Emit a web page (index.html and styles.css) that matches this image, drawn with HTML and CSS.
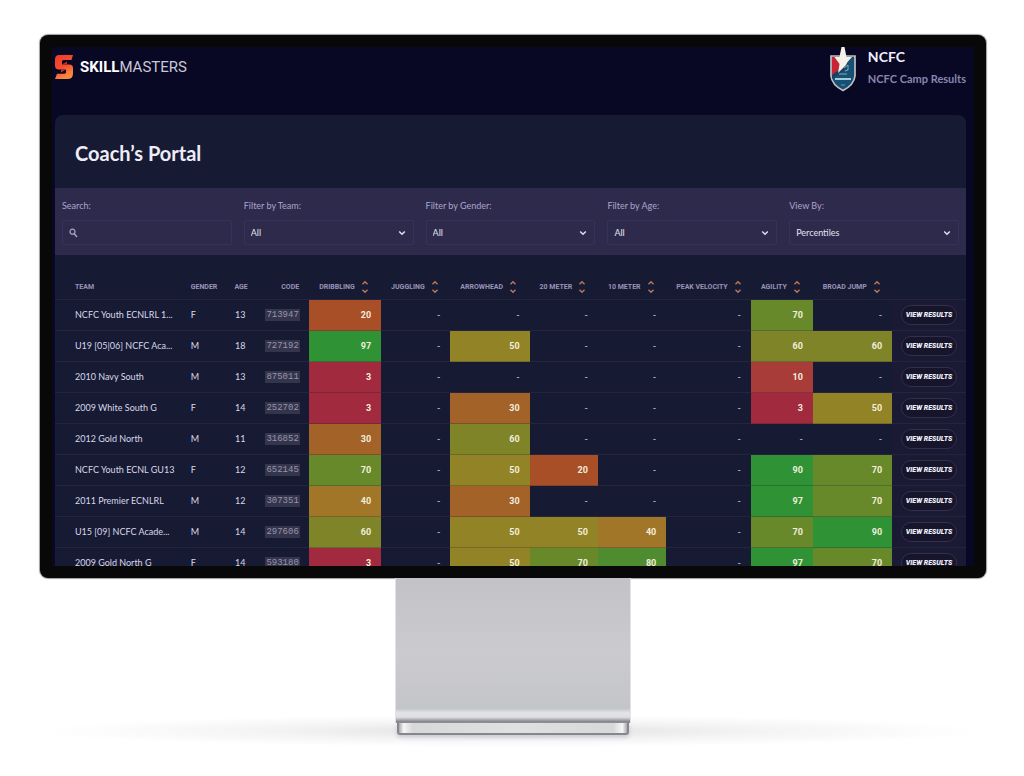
FILE: index.html
```html
<!DOCTYPE html>
<html lang="en">
<head>
<meta charset="utf-8">
<title>Coach’s Portal</title>
<link rel="stylesheet" href="styles.css">
</head>
<body>
<svg class="defs" aria-hidden="true">
  <symbol id="sort" viewBox="0 0 8 14"><path d="M1.5 4.2 4 1.8l2.5 2.4M1.5 9.8 4 12.2l2.500-2.400" fill="none" stroke="currentColor" stroke-width="1.400"/></symbol>
  <symbol id="chevron" viewBox="0 0 8 8"><path d="M1.2 2.5 4 5.3l2.8-2.8" fill="none" stroke="currentColor" stroke-width="1.5"/></symbol>
</svg>
<main class="stage">
  <div class="monitor">
    <div class="screen">
      <header class="topbar">
        <div class="brand">
          <svg class="brand-mark" viewBox="0 0 18 24" aria-hidden="true">
            <defs><linearGradient id="flame" x1="0" y1="0" x2="0.4" y2="1"><stop offset="0" stop-color="#f2382c"/><stop offset="0.6" stop-color="#f4502f"/><stop offset="1" stop-color="#f98a3c"/></linearGradient></defs>
            <path d="M4 0H18L16.500 5H8.500Q7 5 7 6.500V8.500Q7 9.500 8 9.500H14.500Q18 9.500 18 13V18.500Q18 24 12.500 24H0L2 18.700H9.500Q11 18.700 11 17.300V15.500Q11 14.500 10 14.500H4Q0 14.500 0 10.500V4.500Q0 0 4 0Z" fill="url(#flame)"/>
            <path d="M7 9.500 12 6.500V9.500ZM6 14.500H11L6 17.500Z" fill="#c92c26"/>
          </svg>
          <span class="brand-name"><b>SKILL</b>MASTERS</span>
        </div>
        <div class="club">
          <svg class="crest" viewBox="0 0 26 45" aria-hidden="true">
            <path d="M1 9H25V29Q24 38 13 43.500 2 38 1 29Z" fill="#165075" stroke="#c3bfc0" stroke-width="1.700"/>
            <path d="M2 10H12L8 26 2 28Z" fill="#c82436"/>
            <path d="M2 28 18 16V20L2 32Z" fill="#17415f"/>
            <path d="M11.500 0H14.500L16.500 10H22L17.500 15 16 18 8 26 9.500 17 4.500 10H9.500Z" fill="#f6f1e9"/>
            <path d="M14 21 18 18V23L15 24M9 27H17" stroke="#7fabbc" stroke-width="1" fill="none"/>
            <path d="M5 32H21" stroke="#a2cbd9" stroke-width="2"/>
            <path d="M11 38H15" stroke="#5d9bb2"/>
          </svg>
          <div class="club-text"><strong class="club-name">NCFC</strong><span class="club-event">NCFC Camp Results</span></div>
        </div>
      </header>
      <section class="panel">
        <h1 class="title">Coach’s Portal</h1>
        <form class="filters">
          <div class="field"><label for="search">Search:</label>
            <div class="control"><svg class="glass" viewBox="0 0 9 10" aria-hidden="true"><circle cx="3.500" cy="3.700" r="2.500" fill="none" stroke="currentColor" stroke-width="1.200"/><path d="M5.300 5.800 8 9" stroke="currentColor" stroke-width="1.400"/></svg><input id="search" type="text"></div></div>
          <div class="field"><label for="team">Filter by Team:</label>
            <div class="control"><select id="team"><option>All</option></select><svg class="chev"><use href="#chevron"/></svg></div></div>
          <div class="field"><label for="gender">Filter by Gender:</label>
            <div class="control"><select id="gender"><option>All</option></select><svg class="chev"><use href="#chevron"/></svg></div></div>
          <div class="field"><label for="age">Filter by Age:</label>
            <div class="control"><select id="age"><option>All</option></select><svg class="chev"><use href="#chevron"/></svg></div></div>
          <div class="field"><label for="view">View By:</label>
            <div class="control"><select id="view"><option>Percentiles</option></select><svg class="chev"><use href="#chevron"/></svg></div></div>
        </form>
        <table class="results">
          <colgroup><col class="c-team"><col class="c-gender"><col class="c-age"><col class="c-code"><col class="c-drib"><col class="c-jugg"><col class="c-arrow"><col class="c-meter"><col class="c-meter"><col class="c-peak"><col class="c-agil"><col class="c-broad"><col class="c-view"></colgroup>
          <thead><tr><th class="left team">Team</th><th class="left">Gender</th><th>Age</th><th>Code</th>
            <th><button type="button" class="sort">Dribbling<svg><use href="#sort"/></svg></button></th>
            <th><button type="button" class="sort">Juggling<svg><use href="#sort"/></svg></button></th>
            <th><button type="button" class="sort">Arrowhead<svg><use href="#sort"/></svg></button></th>
            <th><button type="button" class="sort">20 Meter<svg><use href="#sort"/></svg></button></th>
            <th><button type="button" class="sort">10 Meter<svg><use href="#sort"/></svg></button></th>
            <th><button type="button" class="sort">Peak Velocity<svg><use href="#sort"/></svg></button></th>
            <th><button type="button" class="sort">Agility<svg><use href="#sort"/></svg></button></th>
            <th><button type="button" class="sort">Broad Jump<svg><use href="#sort"/></svg></button></th>
            <th></th></tr></thead>
          <tbody>
            <tr><td class="left team">NCFC Youth ECNLRL 1...</td><td class="left">F</td><td>13</td><td><code>713947</code></td><td class="s p20">20</td><td class="n">-</td><td class="n">-</td><td class="n">-</td><td class="n">-</td><td class="n">-</td><td class="s p70">70</td><td class="n">-</td><td class="act"><button type="button" class="view">View Results</button></td></tr>
            <tr><td class="left team">U19 [05|06] NCFC Aca...</td><td class="left">M</td><td>18</td><td><code>727192</code></td><td class="s p97">97</td><td class="n">-</td><td class="s p50">50</td><td class="n">-</td><td class="n">-</td><td class="n">-</td><td class="s p60">60</td><td class="s p60">60</td><td class="act"><button type="button" class="view">View Results</button></td></tr>
            <tr><td class="left team">2010 Navy South</td><td class="left">M</td><td>13</td><td><code>875011</code></td><td class="s p3">3</td><td class="n">-</td><td class="n">-</td><td class="n">-</td><td class="n">-</td><td class="n">-</td><td class="s p10">10</td><td class="n">-</td><td class="act"><button type="button" class="view">View Results</button></td></tr>
            <tr><td class="left team">2009 White South G</td><td class="left">F</td><td>14</td><td><code>252702</code></td><td class="s p3">3</td><td class="n">-</td><td class="s p30">30</td><td class="n">-</td><td class="n">-</td><td class="n">-</td><td class="s p3">3</td><td class="s p50">50</td><td class="act"><button type="button" class="view">View Results</button></td></tr>
            <tr><td class="left team">2012 Gold North</td><td class="left">M</td><td>11</td><td><code>316852</code></td><td class="s p30">30</td><td class="n">-</td><td class="s p60">60</td><td class="n">-</td><td class="n">-</td><td class="n">-</td><td class="n">-</td><td class="n">-</td><td class="act"><button type="button" class="view">View Results</button></td></tr>
            <tr><td class="left team">NCFC Youth ECNL GU13</td><td class="left">F</td><td>12</td><td><code>652145</code></td><td class="s p70">70</td><td class="n">-</td><td class="s p50">50</td><td class="s p20">20</td><td class="n">-</td><td class="n">-</td><td class="s p97">90</td><td class="s p70">70</td><td class="act"><button type="button" class="view">View Results</button></td></tr>
            <tr><td class="left team">2011 Premier ECNLRL</td><td class="left">M</td><td>12</td><td><code>307351</code></td><td class="s p40">40</td><td class="n">-</td><td class="s p30">30</td><td class="n">-</td><td class="n">-</td><td class="n">-</td><td class="s p97">97</td><td class="s p70">70</td><td class="act"><button type="button" class="view">View Results</button></td></tr>
            <tr><td class="left team">U15 [09] NCFC Acade...</td><td class="left">M</td><td>14</td><td><code>297606</code></td><td class="s p60">60</td><td class="n">-</td><td class="s p50">50</td><td class="s p50">50</td><td class="s p40">40</td><td class="n">-</td><td class="s p70">70</td><td class="s p97">90</td><td class="act"><button type="button" class="view">View Results</button></td></tr>
            <tr><td class="left team">2009 Gold North G</td><td class="left">F</td><td>14</td><td><code>593180</code></td><td class="s p3">3</td><td class="n">-</td><td class="s p50">50</td><td class="s p70">70</td><td class="s p80">80</td><td class="n">-</td><td class="s p97">97</td><td class="s p70">70</td><td class="act"><button type="button" class="view">View Results</button></td></tr>
          </tbody>
        </table>
      </section>
    </div>
  </div>
  <div class="floor"><div class="stand"><div class="neck"></div><div class="foot"></div></div></div>
</main>
</body>
</html>
```
FILE: styles.css
```css
* { box-sizing: border-box; }
body { margin: 0; background: #fff; font-family: Lato, "Open Sans", sans-serif; color: #d9d8ea; }
button, input, select { font: inherit; color: inherit; }
.defs { display: none; }
.stage { padding: 35px 38px 0 40px; }
.monitor { padding: 12px; background: #080809; border-radius: 8px; box-shadow: 0 0 1px 1px rgba(60, 60, 65, 0.5); }
.screen { aspect-ratio: 922 / 519; overflow: hidden; background: #080724; padding: 0 8px 0 3px; }

.topbar { display: flex; justify-content: space-between; align-items: flex-start; height: 68px; }
.brand { display: flex; align-items: center; gap: 7px; padding-top: 8px; }
.brand-mark { width: 18px; height: 24px; }
.brand-name { font: 400 15px/24px Roboto, sans-serif; color: #c9c8d8; }
.brand-name b { font-weight: 700; color: #fff; }
.club { display: flex; gap: 12px; }
.crest { width: 26px; height: 45px; }
.club-text { display: flex; flex-direction: column; font-family: Lato, sans-serif; }
.club-name { font-size: 14px; line-height: 20px; font-weight: 700; color: #f1f0fa; }
.club-event { font-size: 11px; line-height: 24px; font-weight: 700; color: #8985ae; }

.panel { background: #171a33; border-radius: 8px 8px 0 0; }
.title { margin: 0; padding: 22px 20px 19px; font: 700 20px/32px Lato, sans-serif; color: #eeedf8; }
.filters { display: grid; grid-template-columns: repeat(5, 1fr); gap: 12px; padding: 10px 7px; background: #2e2a4c; }
.field { display: flex; flex-direction: column; gap: 6px; font-size: 9px; color: #aaa6c9; }
.field label { line-height: 16px; }
.control { display: flex; align-items: center; height: 25px; border: 1px solid #37325a; border-radius: 2px; padding: 0 7px 0 6px; }
.control input, .control select { flex: 1; min-width: 0; border: 0; padding: 0; background: none; appearance: none; outline: 0; color: #e5e3f1; }
.control option { background: #2e294c; }
.glass { width: 9px; height: 10px; }
.chev { width: 8px; height: 8px; color: #e0deed; }

.results { width: 100%; table-layout: fixed; border-collapse: separate; border-spacing: 0; font-size: 9px; }
.c-team { width: 13.8%; } .c-gender { width: 4.8%; } .c-age { width: 3.4%; } .c-code { width: 5.9%; }
.c-drib { width: 7.9%; } .c-jugg { width: 7.6%; } .c-arrow { width: 8.7%; } .c-meter { width: 7.5%; }
.c-peak { width: 9.3%; } .c-agil { width: 6.8%; } .c-broad { width: 8.7%; } .c-view { width: 8.1%; }
.results th { height: 45px; padding: 20px 10px 0; border-bottom: 1px solid #25243f; font: 700 7px/14px Roboto, sans-serif; text-transform: uppercase; text-align: right; white-space: nowrap; color: #9894b8; }
.results td { height: 31px; padding: 0 10px 1px; border-bottom: 1px solid #25243f; text-align: right; white-space: nowrap; }
.results .left { text-align: left; }
.results td.team { padding: 0 0 1px 20px; }
.results th.team { padding: 20px 0 0 20px; }
.sort { display: flex; align-items: center; gap: 6px; padding: 0; border: 0; background: none; text-transform: inherit; }
.sort svg { flex: none; width: 8px; height: 14px; color: #b9795f; }
.results code { display: inline-block; padding: 0 1px; background: #34344c; color: #9795ac; font: 9px/12px "Liberation Mono", monospace; }
.results .s { font-family: Roboto, sans-serif; font-weight: 700; color: #f2eedd; border-bottom-color: rgba(23, 26, 51, 0.25); }
.results .n { color: #a9a7be; font-weight: 700; }
.p3 { background: #a22a3e; } .p10 { background: #a83c38; } .p20 { background: #a84f28; } .p30 { background: #a26228; }
.p40 { background: #a27628; } .p50 { background: #928326; } .p60 { background: #808428; } .p70 { background: #67892a; }
.p80 { background: #4f8c30; } .p97 { background: #2f9235; }
.results .act { padding: 0 9px; background: #1b1a35; }
.view { display: block; width: 100%; height: 20px; padding: 0; border: 1px solid #342f4b; border-radius: 10px; background: #16152c; font: italic 900 7px/18px Roboto, sans-serif; text-transform: uppercase; color: #f0eff8; }

.floor { display: flex; justify-content: center; background: radial-gradient(ellipse 50% 16px at 50% 153px, #dfdfe1 0, #f3f3f4 50%, rgba(255, 255, 255, 0) 100%); padding-bottom: 39px; }
.stand { width: 25%; display: flex; flex-direction: column; align-items: center; }
.neck { width: 100%; height: 145px; border: solid #e3e3e6; border-width: 0 1px; background: linear-gradient(#c2c2c7 0, #cbcbcf 52%, #c4c5c9 90%, #e4e4e6 93%, #dedee1 96%, #85858e 99%); }
.foot { width: 98%; height: 12px; border: solid #85868e; border-width: 0 2px 2px; border-radius: 0 0 3px 3px; background: linear-gradient(90deg, #aaa 0, #f5f5f6 2%, #d8d8db 6%, #e0e0e2 50%, #d8d8db 94%, #f5f5f6 98%, #aaa 100%); box-shadow: 0 2px 4px #c5c8d0; }
```
